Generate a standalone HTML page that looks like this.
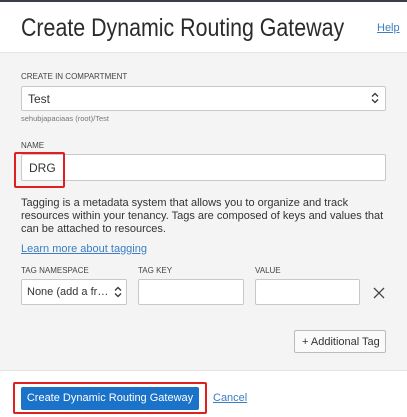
<!DOCTYPE html>
<html><head><style>
*{box-sizing:border-box;margin:0;padding:0}
body{width:407px;height:417px;overflow:hidden;font-family:"Liberation Sans",sans-serif;background:#f4f4f4;position:relative;color:#333}
.a{position:absolute}
.hdr{left:0;top:0;width:407px;height:53px;background:#fff;border-top:2px solid #3a3f45;border-bottom:1px solid #e4e4e4}
.lbl{font-size:8px;color:#444}
.box{background:#fff;border:1px solid #c8c8c8;border-radius:2px}
.ftr{left:0;top:370px;width:407px;height:47px;background:#fff;border-top:1px solid #e4e4e4}
a{color:#3b7ec4}
</style></head><body>
<div class="a hdr"></div>
<div class="a" style="left:21px;top:14px;font-size:25px;color:#2b2b2b;transform:scaleX(0.855);transform-origin:0 0;white-space:nowrap">Create Dynamic Routing Gateway</div>
<div class="a" style="left:377px;top:22px;font-size:11px"><a style="text-decoration:underline">Help</a></div>

<div class="a lbl" style="left:21px;top:72px">CREATE IN COMPARTMENT</div>
<div class="a box" style="left:21px;top:86px;width:365px;height:25px"></div>
<div class="a" style="left:28px;top:92px;font-size:12px">Test</div>
<svg class="a" style="left:371px;top:92px" width="8" height="12" viewBox="0 0 8 12"><path d="M1 4.5L4 1.5L7 4.5M1 7.5L4 10.5L7 7.5" fill="none" stroke="#333" stroke-width="1.3"/></svg>
<div class="a" style="left:21px;top:114px;font-size:7.5px;color:#777">sehubjapaciaas (root)/Test</div>

<div class="a lbl" style="left:21px;top:141px">NAME</div>
<div class="a box" style="left:21px;top:154px;width:365px;height:27px"></div>
<div class="a" style="left:29px;top:161px;font-size:12px">DRG</div>
<div class="a" style="left:14px;top:152px;width:51px;height:36px;border:2px solid #e02020;border-radius:2px"></div>

<div class="a" style="left:21px;top:197px;width:370px;font-size:11px;line-height:13px;color:#333">Tagging is a metadata system that allows you to organize and track resources within your tenancy. Tags are composed of keys and values that can be attached to resources.</div>
<div class="a" style="left:21px;top:243px;font-size:11px"><a style="text-decoration:underline">Learn more about tagging</a></div>

<div class="a lbl" style="left:21px;top:266px">TAG NAMESPACE</div>
<div class="a lbl" style="left:138px;top:266px">TAG KEY</div>
<div class="a lbl" style="left:255px;top:266px">VALUE</div>
<div class="a box" style="left:21px;top:279px;width:106px;height:26px"></div>
<div class="a" style="left:27px;top:286px;font-size:11px">None (add a fr…</div>
<svg class="a" style="left:114px;top:286px" width="8" height="12" viewBox="0 0 8 12"><path d="M1 4.5L4 1.5L7 4.5M1 7.5L4 10.5L7 7.5" fill="none" stroke="#333" stroke-width="1.3"/></svg>
<div class="a box" style="left:138px;top:279px;width:106px;height:26px"></div>
<div class="a box" style="left:255px;top:279px;width:105px;height:26px"></div>
<svg class="a" style="left:373px;top:287px" width="12" height="12" viewBox="0 0 12 12"><path d="M1 1L11 11M11 1L1 11" stroke="#444" stroke-width="1.3"/></svg>

<div class="a box" style="left:294px;top:330px;width:92px;height:23px;background:#fafafa;border-color:#bbb"></div>
<div class="a" style="left:302px;top:336px;font-size:11px">+ Additional Tag</div>

<div class="a ftr"></div>
<div class="a" style="left:21px;top:387px;width:178px;height:23px;background:#1a72c9;border-radius:2px;color:#fff;font-size:11px;text-align:center;line-height:23px">Create Dynamic Routing Gateway</div>
<div class="a" style="left:13px;top:382px;width:194px;height:32px;border:2px solid #e02020;border-radius:2px"></div>
<div class="a" style="left:213px;top:392px;font-size:11px"><a style="text-decoration:underline">Cancel</a></div>
</body></html>
